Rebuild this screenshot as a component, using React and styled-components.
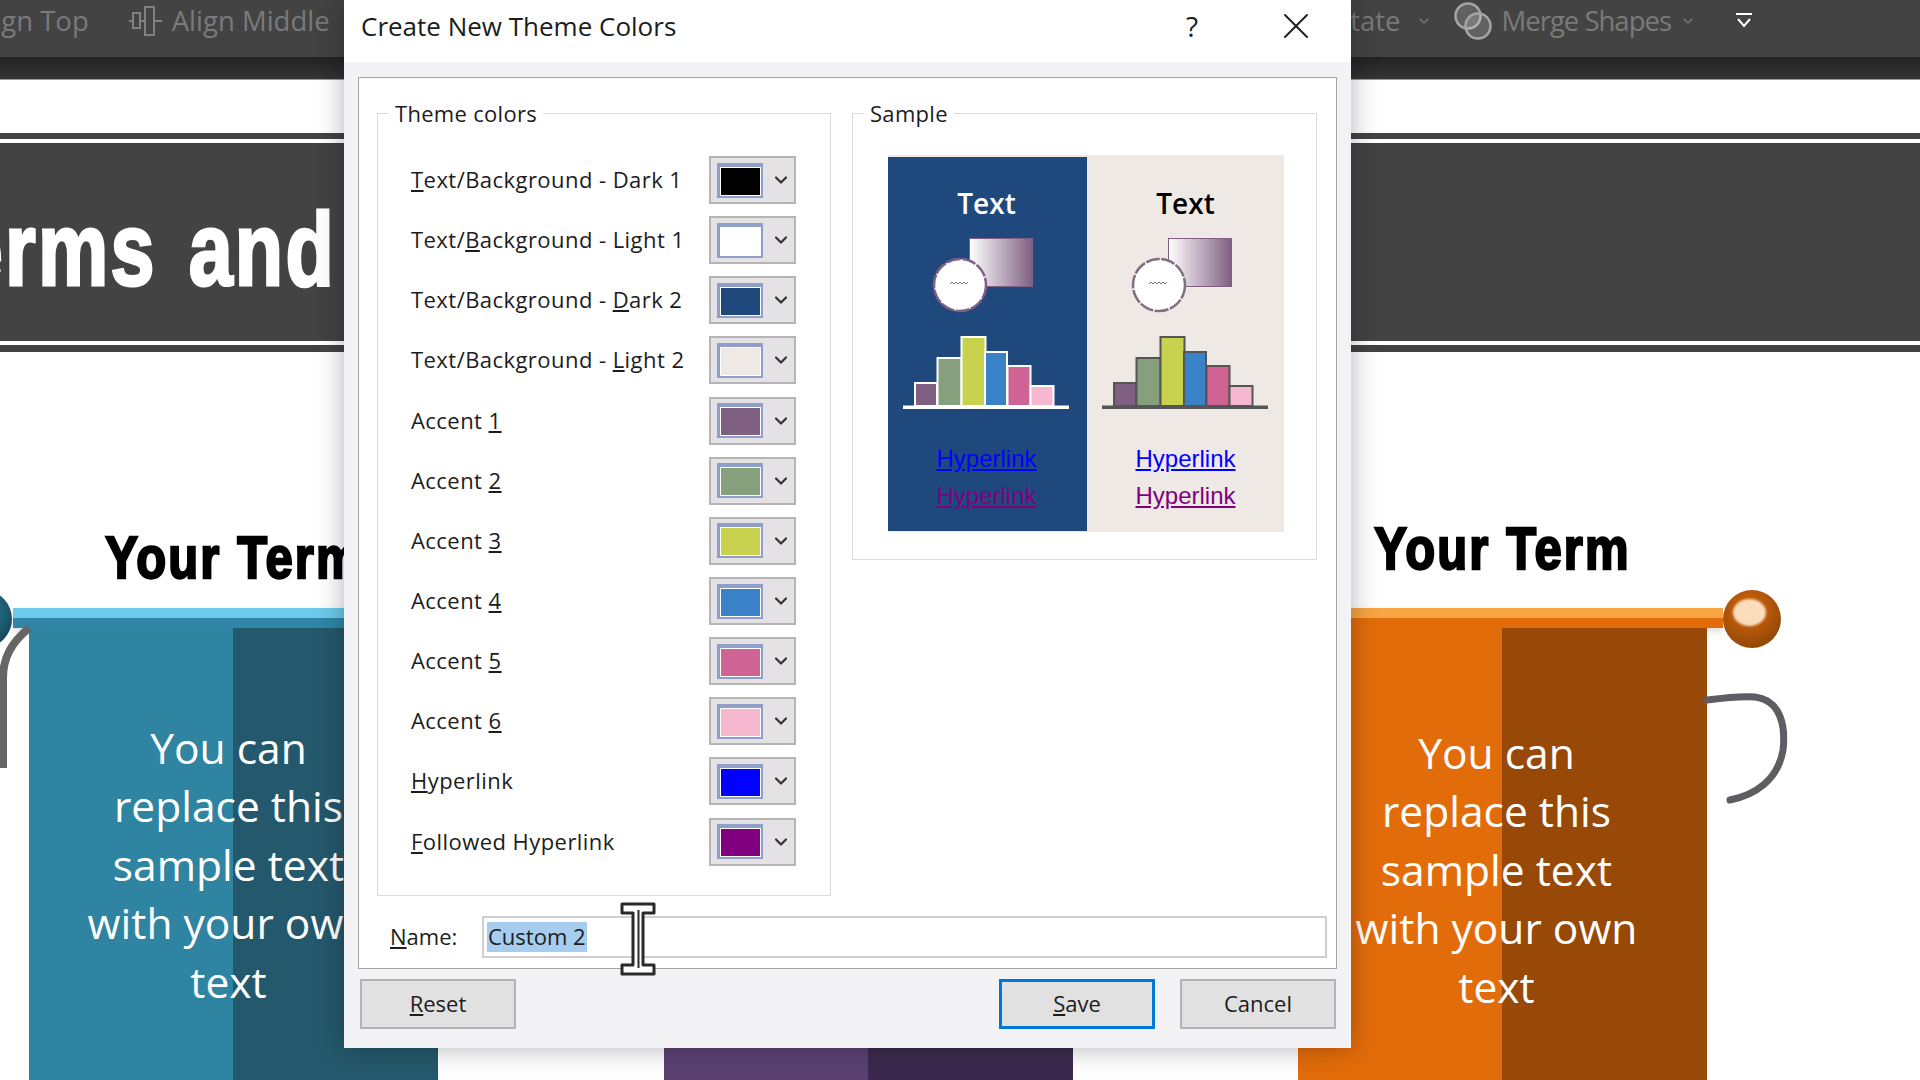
import React from "react";
import styled, { createGlobalStyle } from "styled-components";
import { ChevronDown, X } from "lucide-react";

const GlobalStyle = createGlobalStyle`
  html, body { margin: 0; padding: 0; background: #fff; }
  body { font-family: "Open Sans", "Liberation Sans", sans-serif; }
`;

const UI_FONT = `"Open Sans", "Noto Sans", "Liberation Sans", sans-serif`;
const HEAVY_FONT = `"Liberation Sans", Arial, sans-serif`;

const Page = styled.div`
  position: relative;
  width: 1920px;
  height: 1080px;
  overflow: hidden;
  background: #fff;
`;

/* ribbon behind the dialog */
const Ribbon = styled.div`
  height: 57px;
  background: #434343;
  display: flex;
  justify-content: space-between;
  align-items: center;
  color: #7a7a7a;
  font: 400 27.5px ${UI_FONT};
  white-space: nowrap;
  overflow: hidden;
`;
const RibbonFoot = styled.div`
  height: 22px;
  background: linear-gradient(#232323, #343434);
  border-bottom: 1px solid #9a9a9a;
`;
const RibbonGroup = styled.div`
  display: flex;
  align-items: center;
  gap: ${(p) => p.$gap}px;
  margin: -16px ${(p) => p.$right || 0}px 0 ${(p) => p.$left || 0}px;
`;
const RibbonItem = styled.div`
  display: flex;
  align-items: center;
  gap: ${(p) => p.$gap || 9}px;
  letter-spacing: ${(p) => p.$tight || 0}px;
`;
const CollapseSlot = styled.div`
  margin-left: 18px;
  display: flex;
`;

const Band = styled.div`
  margin-top: 53px;
  background: #434343;
  padding: 6px 0 7px;
`;
const BandInner = styled.div`
  height: 198px;
  border-top: 4px solid #fff;
  border-bottom: 4px solid #fff;
  display: flex;
  align-items: center;
`;
const BandTitle = styled.div`
  width: 336px;
  margin-top: 14px;
  display: flex;
  justify-content: flex-end;
  white-space: pre;
  color: #fff;
  font: 700 104px ${HEAVY_FONT};
  letter-spacing: 3px;
  word-spacing: 10px;
  -webkit-text-stroke: 3px #fff;
  transform: scaleX(0.76);
  transform-origin: right center;
`;

/* the three term columns */
const Terms = styled.div`
  display: grid;
  grid-template-columns: repeat(3, 441px);
  justify-content: space-between;
  padding: 0 197px 0 13px;
`;
const Term = styled.div`
  position: relative;
  display: flex;
  flex-direction: column;
`;
const TermHeading = styled.div`
  height: 256px;
  box-sizing: border-box;
  padding-bottom: ${(p) => p.$lift}px;
  display: flex;
  align-items: flex-end;
  justify-content: center;
  color: #000;
  font: 700 59px/1 ${HEAVY_FONT};
  letter-spacing: 2.5px;
  white-space: nowrap;
  -webkit-text-stroke: 2.4px #000;
`;
const HeadingText = styled.span`
  display: inline-block;
  transform: scaleX(0.83);
`;
const Rod = styled.div`
  height: 20px;
  background: linear-gradient(${(p) => p.$light} 50%, ${(p) => p.$dark} 50%);
  box-shadow: 0 3px 6px rgba(0, 0, 0, 0.15);
`;
const Knob = styled.div`
  position: absolute;
  top: 238px;
  ${(p) => (p.$side === "left" ? "left: -59px;" : "right: -58px;")}
  width: 58px;
  height: 58px;
  border-radius: 50%;
  background: radial-gradient(circle at 45% 35%, ${(p) => p.$mid}, ${(p) => p.$edge} 85%);
  &::after {
    content: "";
    position: absolute;
    left: 10px;
    top: 9px;
    width: 33px;
    height: 27px;
    border-radius: 50%;
    background: ${(p) => p.$shine};
    filter: blur(1px);
  }
`;
const Card = styled.div`
  margin: 0 16px;
  height: 452px;
  background: linear-gradient(90deg, ${(p) => p.$left} 50%, ${(p) => p.$right} 50%);
  padding-top: ${(p) => p.$pad}px;
  box-sizing: border-box;
  color: #fff;
  text-align: center;
  font: 400 42.5px/58.4px ${UI_FONT};
  white-space: nowrap;
`;
const CardText = styled.div`
  margin-left: ${(p) => p.$shift}px;
`;
const Hook = styled.svg`
  position: absolute;
  overflow: visible;
  left: 0;
  top: 0;
`;

/* dialog */
const Dialog = styled.div`
  position: absolute;
  left: 344px;
  top: 0;
  width: 1007px;
  display: flex;
  flex-direction: column;
  background: #f3f2f4;
  box-shadow: 0 0 26px rgba(0, 0, 0, 0.3);
  color: #1c1c1c;
  font: 400 22px ${UI_FONT};
`;
const TitleBar = styled.div`
  height: 62px;
  background: #fff;
  display: flex;
  align-items: center;
  padding: 0 33px 10px 17px;
  box-sizing: border-box;
`;
const DialogTitle = styled.div`
  flex: 1;
  font-size: 26px;
`;
const HelpMark = styled.span`
  font-size: 28px;
  margin-right: 76px;
`;
const DialogBody = styled.div`
  padding: 15px 14px 19px;
  display: flex;
  flex-direction: column;
`;
const Panel = styled.div`
  background: #fff;
  border: 1px solid #a3a3a3;
  padding: 22px 0 10px;
`;
const Groups = styled.div`
  display: grid;
  grid-template-columns: 454px 465px;
  gap: 21px;
  align-items: start;
  margin: 0 19px 0 18px;
`;
const Group = styled.fieldset`
  margin: 0;
  min-width: 0;
  border: 1px solid #dcdcdc;
  padding: ${(p) => p.$padding};
`;
const Legend = styled.legend`
  padding: 0 6px;
  margin-left: ${(p) => p.$offset}px;
  line-height: 26px;
  letter-spacing: 0.3px;
`;
const ColorRow = styled.div`
  height: 60.15px;
  display: flex;
  align-items: center;
  justify-content: space-between;
`;
const ColorLabel = styled.span`
  letter-spacing: 0.45px;
  margin-top: -2px;
`;
const ColorButton = styled.div`
  width: 87px;
  height: 48px;
  box-sizing: border-box;
  background: #e4e2e4;
  border: 2px solid #b5b5b5;
  display: flex;
  align-items: center;
  padding-left: 6px;
  gap: 8px;
`;
const Swatch = styled.div`
  width: 46px;
  height: 35px;
  box-sizing: border-box;
  border: 3px solid #8f9fc9;
  border-width: 4px 2px 2px 3px;
  background: #fff;
  padding: 1px;
  &::before {
    content: "";
    display: block;
    height: 100%;
    background: ${(p) => p.$color};
  }
`;
const Preview = styled.div`
  display: flex;
  width: 396px;
  height: 377px;
  background: #efe9e5;
`;
const PreviewPane = styled.div`
  width: ${(p) => (p.$dark ? 199 : 197)}px;
  display: flex;
  flex-direction: column;
  align-items: center;
  box-sizing: border-box;
  ${(p) =>
    p.$dark
      ? "background: #1f497d; margin: 2px 0 1px; padding: 28px 2px 0 0;"
      : "padding-top: 30px;"}
`;
const PreviewTitle = styled.div`
  height: 36px;
  line-height: 36px;
  font-size: 28px;
  font-weight: 600;
  color: ${(p) => (p.$dark ? "#fff" : "#000")};
`;
const PreviewArt = styled.svg`
  margin-top: 9px;
  display: block;
`;
const PreviewLinks = styled.div`
  margin-top: 25px;
  text-align: center;
  font: 400 24px/37px "Liberation Sans", Arial, sans-serif;
`;
const PreviewLink = styled.div`
  color: ${(p) => p.$color};
  text-decoration: underline;
`;
const NameRow = styled.div`
  margin-top: 20px;
  padding: 0 9px 0 31px;
  display: flex;
  align-items: center;
`;
const NameLabel = styled.div`
  width: 92px;
  margin-top: -2px;
`;
const NameField = styled.div`
  flex: 1;
  height: 42px;
  box-sizing: border-box;
  border: 2px solid #cfcfcf;
  padding-left: 3px;
  display: flex;
  align-items: center;
`;
const Selected = styled.span`
  background: #a6cdf0;
  line-height: 28px;
  padding: 0 1px 2px;
`;
const ButtonRow = styled.div`
  margin-top: 10px;
  padding: 0 1px 0 2px;
  display: flex;
  gap: 25px;
`;
const DialogButton = styled.button`
  width: 156px;
  height: 50px;
  box-sizing: border-box;
  background: #e1e1e1;
  color: #1c1c1c;
  border: ${(p) => (p.$primary ? "3px solid #0078d7" : "2px solid #b4b4b4")};
  font: 400 22px ${UI_FONT};
  padding: 0 0 2px;
  margin-left: ${(p) => (p.$push ? "auto" : "0")};
`;
const Cursor = styled.svg`
  position: absolute;
  left: 276px;
  top: 902px;
`;

const COLOR_ROWS = [
  [<><u>T</u>ext/Background - Dark 1</>, "#000000"],
  [<>Text/<u>B</u>ackground - Light 1</>, "#ffffff"],
  [<>Text/Background - <u>D</u>ark 2</>, "#1f497d"],
  [<>Text/Background - <u>L</u>ight 2</>, "#efe9e5"],
  [<>Accent <u>1</u></>, "#7f5f82"],
  [<>Accent <u>2</u></>, "#86a07e"],
  [<>Accent <u>3</u></>, "#c8d24f"],
  [<>Accent <u>4</u></>, "#3a82c8"],
  [<>Accent <u>5</u></>, "#cf6394"],
  [<>Accent <u>6</u></>, "#f5b8cf"],
  [<><u>H</u>yperlink</>, "#0000ff"],
  [<><u>F</u>ollowed Hyperlink</>, "#800080"],
];

const BARS = [
  [27, 153, 22, "#7f5f82"],
  [49.5, 128, 24, "#86a07e"],
  [73.5, 107, 24, "#c8d24f"],
  [97, 122, 22, "#3a82c8"],
  [119.5, 136, 23, "#cf6394"],
  [142.5, 156, 23, "#f5b8cf"],
];

const TERM_TEXT = ["You can", "replace this", "sample text", "with your own", "text"];

function TermLines() {
  return TERM_TEXT.map((line) => <div key={line}>{line}</div>);
}

function SampleArt({ id, line, ring }) {
  return (
    <PreviewArt width="197" height="185" viewBox="0 0 197 185">
      <defs>
        <linearGradient id={id}>
          <stop offset="0" stopColor="#fff" />
          <stop offset="1" stopColor="#7f5f82" />
        </linearGradient>
      </defs>
      <rect x="81.5" y="8.5" width="63" height="48" fill={`url(#${id})`} stroke="#7f5f82" />
      <circle cx="72" cy="55" r="26" fill="#fff" stroke={ring} strokeWidth="2.5" strokeDasharray="14 1.5" />
      <path d="M62 54l2-2 2 2 2-2 2 2 2-2 2 2 2-2 2 2 2-2" fill="none" stroke="#777" />
      {BARS.map(([x, y, w, fill]) => (
        <rect key={x} x={x} y={y} width={w} height={176 - y} fill={fill} stroke={line} strokeWidth="2" />
      ))}
      <rect x="15" y="175.5" width="166" height="3.5" fill={line} />
    </PreviewArt>
  );
}

function AlignMiddleIcon() {
  return (
    <svg width="34" height="32" viewBox="0 0 34 32" fill="none" stroke="#808080" strokeWidth="2">
      <rect x="4" y="8" width="7" height="15" />
      <rect x="16" y="2" width="9" height="28" />
      <path d="M0 16h4M11 16h5M25 16h8" />
    </svg>
  );
}

function MergeIcon() {
  return (
    <svg width="38" height="38" viewBox="0 0 38 38" fill="none" stroke="#a5a5a5" strokeWidth="2.5">
      <circle cx="14" cy="14" r="12.5" fill="rgba(255,255,255,0.16)" />
      <circle cx="24" cy="24" r="12.5" fill="rgba(255,255,255,0.16)" />
    </svg>
  );
}

function CollapseIcon() {
  return (
    <svg width="16" height="16" viewBox="0 0 16 16" fill="none" stroke="#fff" strokeWidth="2">
      <path d="M0 1h16M2 6l6 7 6-7" />
    </svg>
  );
}

function IBeam() {
  return (
    <Cursor width="36" height="74" viewBox="0 0 36 74">
      <path
        d="M2 2h32v9H23v52h11v9H2v-9h11V11H2z"
        fill="#fff"
        stroke="#2a2a2a"
        strokeWidth="3"
        strokeLinejoin="round"
      />
      <path d="M18.5 8v58" stroke="#2a2a2a" strokeWidth="2" />
    </Cursor>
  );
}

export default function App() {
  return (
    <Page>
      <GlobalStyle />
      <Ribbon>
        <RibbonGroup $gap={40} $left={-30}>
          <span>Align Top</span>
          <RibbonItem>
            <AlignMiddleIcon />
            Align Middle
          </RibbonItem>
        </RibbonGroup>
        <RibbonGroup $gap={22} $right={168}>
          <RibbonItem $gap={16}>
            Rotate
            <ChevronDown size={16} strokeWidth={2} />
          </RibbonItem>
          <RibbonItem $tight={-1}>
            <MergeIcon />
            Merge Shapes
            <ChevronDown size={16} strokeWidth={2} />
          </RibbonItem>
          <CollapseSlot>
            <CollapseIcon />
          </CollapseSlot>
        </RibbonGroup>
      </Ribbon>
      <RibbonFoot />

      <Band>
        <BandInner>
          <BandTitle>Terms and</BandTitle>
        </BandInner>
      </Band>

      <Terms>
        <Term>
          <TermHeading $lift={20}>
            <HeadingText>Your Term</HeadingText>
          </TermHeading>
          <Rod $light="#6ccaea" $dark="#2f86a6" />
          <Knob $side="left" $mid="#2f88a6" $edge="#123f50" $shine="transparent" />
          <Card $left="#2e84a1" $right="#24586c" $pad={91}>
            <CardText $shift={-10}>
              <TermLines />
            </CardText>
          </Card>
          <Hook width="30" height="160">
            <path d="M16 276C-2 291-10 306-10 326L-10 416" fill="none" stroke="#666" strokeWidth="8" />
          </Hook>
        </Term>
        <Term>
          <TermHeading $lift={20}>
            <HeadingText>Your Term</HeadingText>
          </TermHeading>
          <Rod $light="#a98fc8" $dark="#5b4272" />
          <Card $left="#5b4272" $right="#3b2a4e" $pad={91}>
            <TermLines />
          </Card>
        </Term>
        <Term>
          <TermHeading $lift={29}>
            <HeadingText>Your Term</HeadingText>
          </TermHeading>
          <Rod $light="#f8a544" $dark="#e36c0a" />
          <Knob $side="right" $mid="#d9680f" $edge="#8a4406" $shine="#fbdcbc" />
          <Card $left="#e36c0a" $right="#984807" $pad={96}>
            <CardText $shift={-12}>
              <TermLines />
            </CardText>
          </Card>
          <Hook width="90" height="120">
            <path
              d="M425 348C448 345 463 344 473 345C498 348 504 373 501 398C496 428 473 443 448 448"
              fill="none"
              stroke="#5d5d62"
              strokeWidth="7"
              strokeLinecap="round"
            />
          </Hook>
        </Term>
      </Terms>

      <Dialog>
        <TitleBar>
          <DialogTitle>Create New Theme Colors</DialogTitle>
          <HelpMark>?</HelpMark>
          <X size={44} strokeWidth={1.1} color="#222" />
        </TitleBar>
        <DialogBody>
          <Panel>
            <Groups>
              <Group $padding="24px 34px 23px 33px">
                <Legend $offset={-22}>Theme colors</Legend>
                {COLOR_ROWS.map(([label, color], i) => (
                  <ColorRow key={i}>
                    <ColorLabel>{label}</ColorLabel>
                    <ColorButton>
                      <Swatch $color={color} />
                      <ChevronDown size={20} strokeWidth={2.6} color="#333" />
                    </ColorButton>
                  </ColorRow>
                ))}
              </Group>
              <Group $padding="29px 31px 27px 35px">
                <Legend $offset={-24}>Sample</Legend>
                <Preview>
                  <PreviewPane $dark>
                    <PreviewTitle $dark>Text</PreviewTitle>
                    <SampleArt id="fade-dark" line="#fff" ring="#7f5f82" />
                    <PreviewLinks>
                      <PreviewLink $color="#0000ff">Hyperlink</PreviewLink>
                      <PreviewLink $color="#800080">Hyperlink</PreviewLink>
                    </PreviewLinks>
                  </PreviewPane>
                  <PreviewPane>
                    <PreviewTitle>Text</PreviewTitle>
                    <SampleArt id="fade-light" line="#555" ring="#7f6f80" />
                    <PreviewLinks>
                      <PreviewLink $color="#0000ff">Hyperlink</PreviewLink>
                      <PreviewLink $color="#800080">Hyperlink</PreviewLink>
                    </PreviewLinks>
                  </PreviewPane>
                </Preview>
              </Group>
            </Groups>
            <NameRow>
              <NameLabel>
                <u>N</u>ame:
              </NameLabel>
              <NameField>
                <Selected>Custom 2</Selected>
              </NameField>
            </NameRow>
          </Panel>
          <ButtonRow>
            <DialogButton>
              <u>R</u>eset
            </DialogButton>
            <DialogButton $primary $push>
              <u>S</u>ave
            </DialogButton>
            <DialogButton>Cancel</DialogButton>
          </ButtonRow>
        </DialogBody>
        <IBeam />
      </Dialog>
    </Page>
  );
}
